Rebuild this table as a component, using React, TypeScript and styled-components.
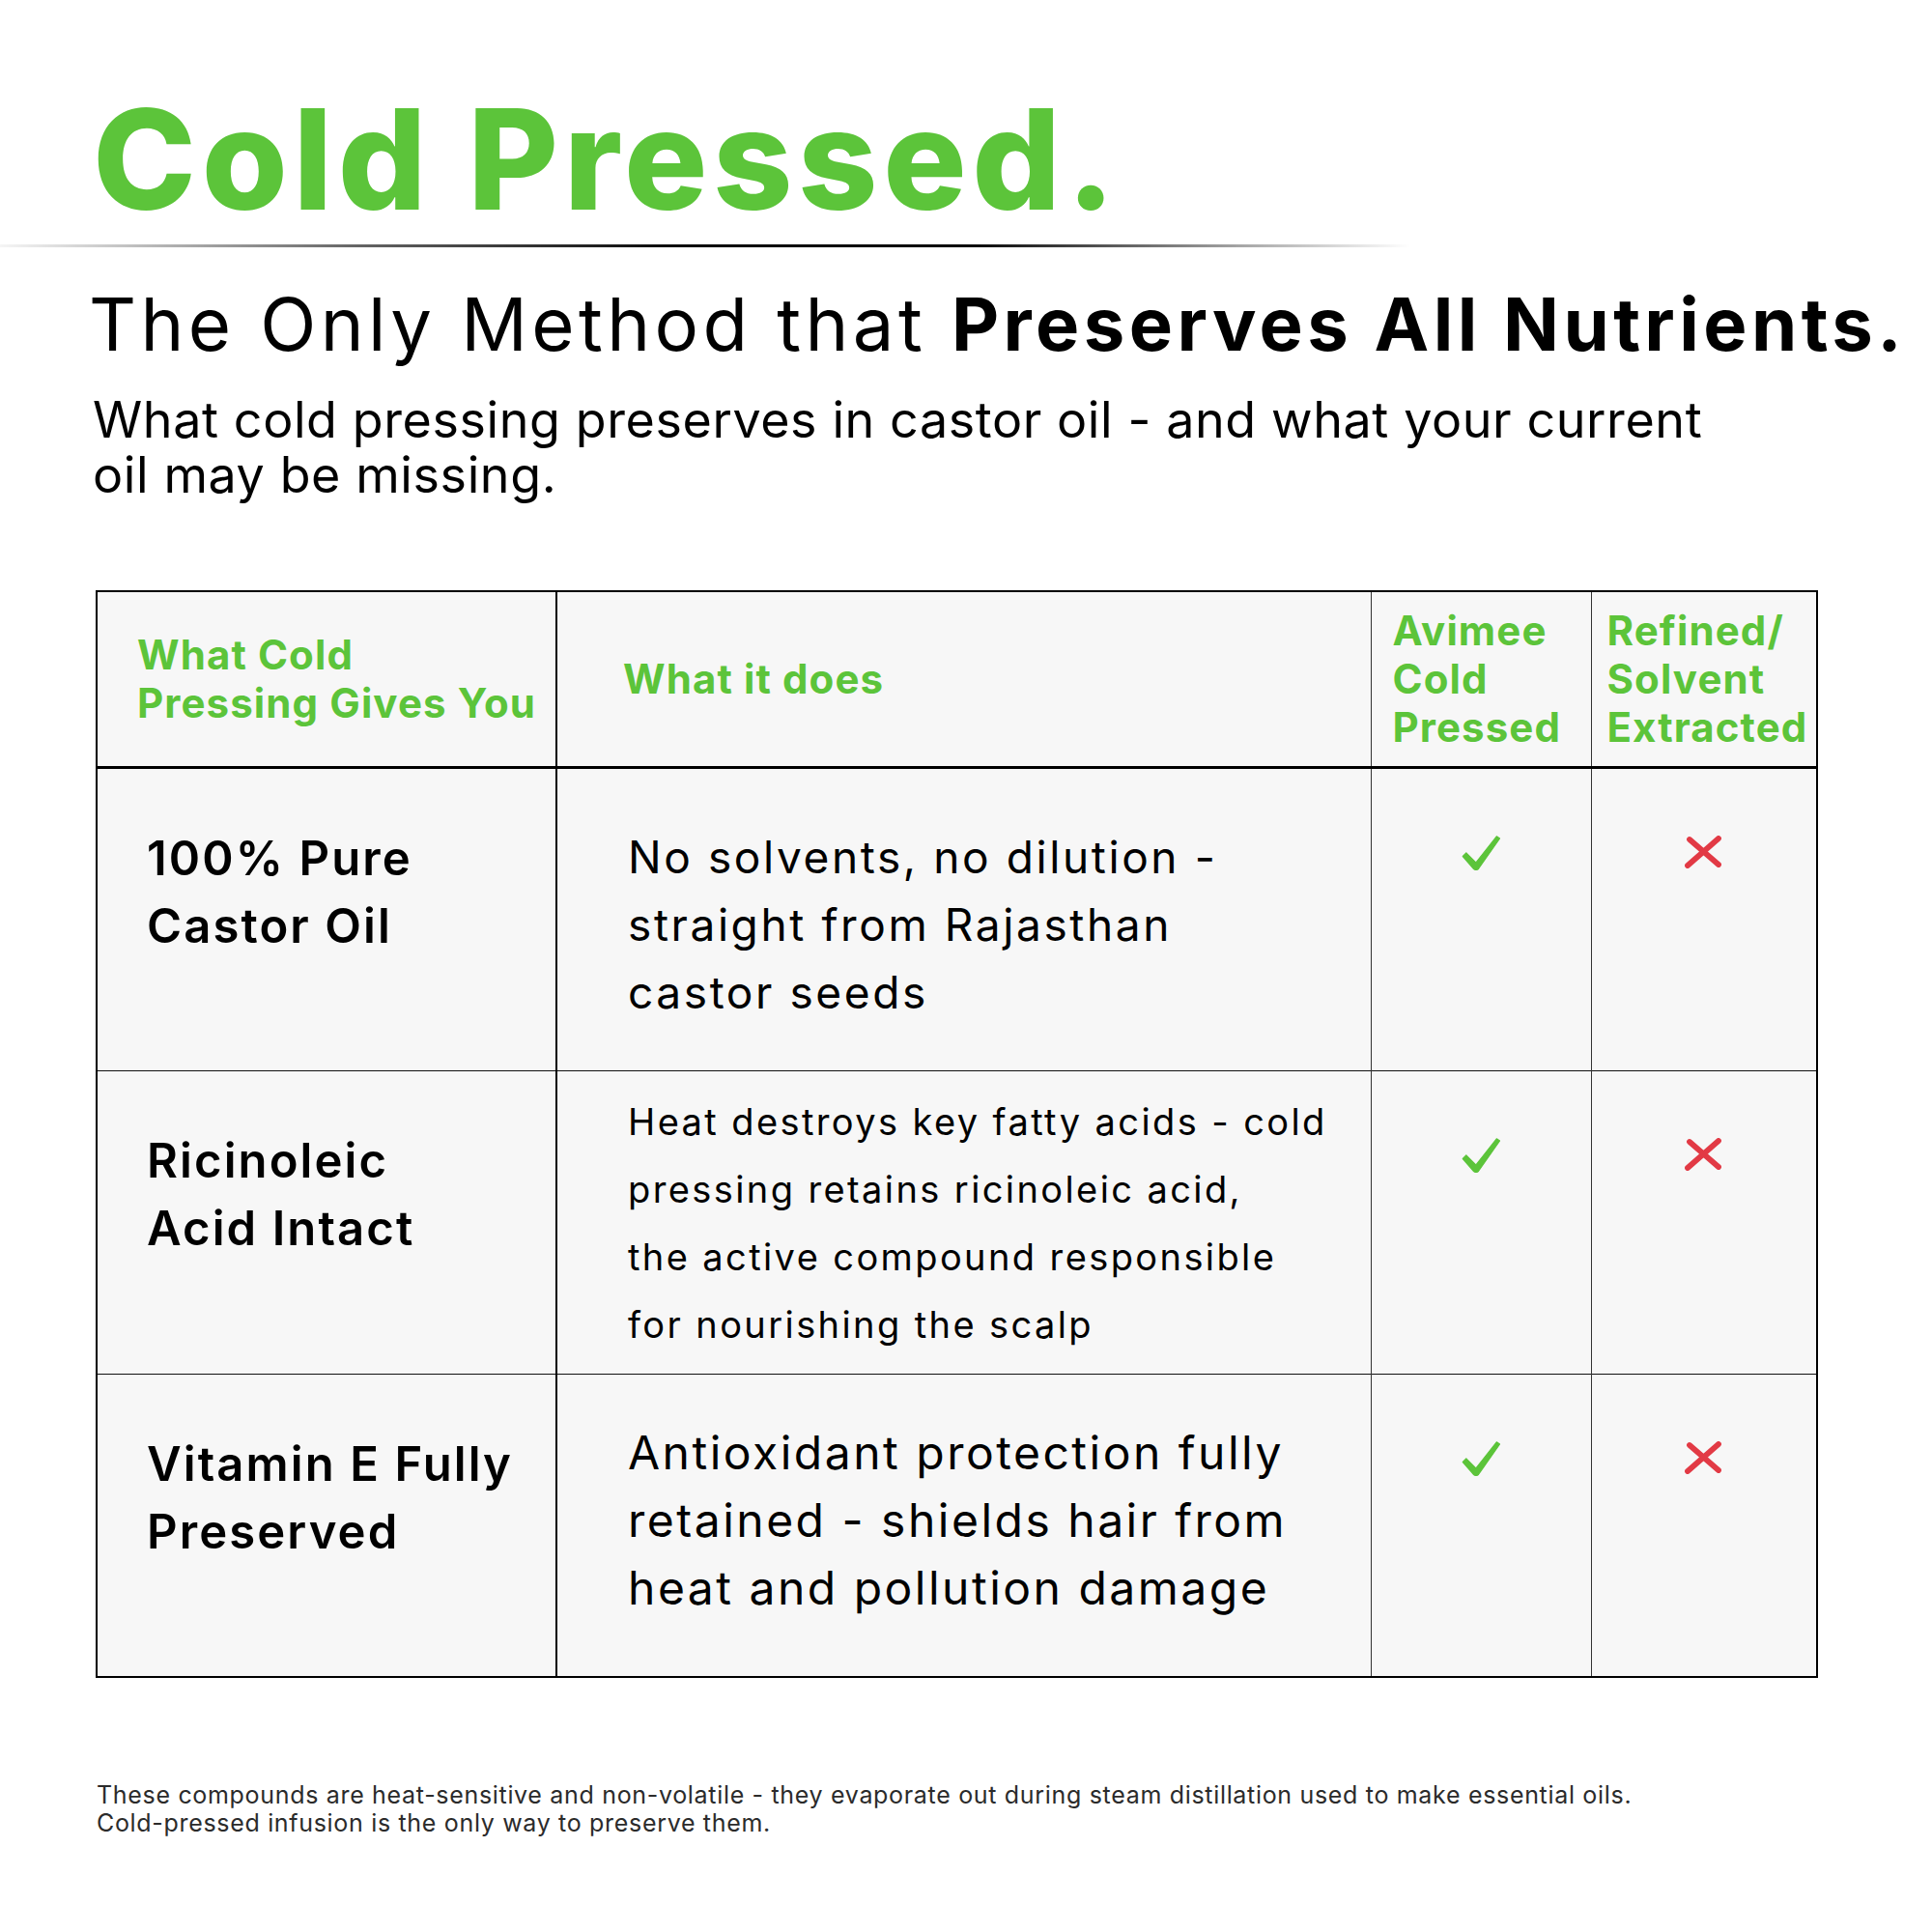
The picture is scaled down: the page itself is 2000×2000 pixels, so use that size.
import React from 'react';
import styled, { createGlobalStyle } from 'styled-components';

const GREEN = '#5cc43a';
const RED = '#e23a45';
const FONT = `"Inter", "Liberation Sans", sans-serif`;

const GlobalStyle = createGlobalStyle`
  html, body { margin: 0; padding: 0; background: #ffffff; }
  body { width: 2000px; height: 2000px; overflow: hidden; font-family: ${FONT}; }
`;

const Page = styled.div`
  position: relative;
  width: 2000px;
  height: 2000px;
  box-sizing: border-box;
  padding: 93px 0 0 96px;
  background: #ffffff;
  color: #000;
  font-family: ${FONT};
`;

const Title = styled.h1`
  margin: 0;
  font-size: 144px;
  line-height: 144px;
  font-weight: 800;
  color: ${GREEN};
  letter-spacing: 5.6px;
  white-space: nowrap;
`;

const Divider = styled.div`
  margin: 16px 0 0 -96px;
  width: 1460px;
  height: 3px;
  background: linear-gradient(90deg, rgba(0,0,0,0.04) 0%, rgba(0,0,0,0.6) 25%, #000 50%, #000 68%, rgba(0,0,0,0.35) 88%, rgba(0,0,0,0) 100%);
`;

const Subtitle = styled.h2`
  margin: 41px 0 0 -4px;
  font-size: 76px;
  line-height: 76px;
  font-weight: 400;
  white-space: nowrap;
  letter-spacing: 4.4px;
  strong { font-weight: 700; }
`;

const Lead = styled.p`
  margin: 33px 0 0 0;
  font-size: 52px;
  line-height: 57px;
  font-weight: 400;
  white-space: nowrap;
  letter-spacing: 0.6px;
`;

const Table = styled.table`
  margin: 91px 0 0 3px;
  border-collapse: collapse;
  table-layout: fixed;
  width: 1781px;
  background: #f7f7f7;
  border: 2px solid #000;
  font-family: ${FONT};
`;

const HeadRow = styled.tr`
  height: 182px;
  border-bottom: 3px solid #000;
`;

const BodyRow = styled.tr`
  height: 314px;
  border-bottom: 1.5px solid #111;
`;

const HeadCell = styled.th<{ $pad: number; $strong?: boolean }>`
  padding: 0 0 0 ${(p) => p.$pad}px;
  text-align: left;
  vertical-align: middle;
  font-size: 42px;
  line-height: 50px;
  font-weight: 700;
  letter-spacing: 1.1px;
  color: ${GREEN};
  white-space: nowrap;
  border-right: ${(p) => (p.$strong ? '2px solid #000' : '1px solid #333')};
`;

const LabelCell = styled.td`
  padding: 58px 0 0 51px;
  vertical-align: top;
  font-size: 49px;
  line-height: 70px;
  font-weight: 600;
  letter-spacing: 2.1px;
  white-space: nowrap;
  border-right: 2px solid #000;
`;

const TextCell = styled.td<{ $size: number; $top: number; $track: number }>`
  padding: ${(p) => p.$top}px 0 0 73px;
  vertical-align: top;
  font-size: ${(p) => p.$size}px;
  line-height: 70px;
  font-weight: 400;
  letter-spacing: ${(p) => p.$track}px;
  white-space: nowrap;
  border-right: 1px solid #333;
`;

const MarkCell = styled.td`
  padding: 69px 0 0 0;
  vertical-align: top;
  text-align: center;
  border-right: 1px solid #333;
  svg { display: inline-block; }
`;

const Footer = styled.p`
  margin: 0;
  position: absolute;
  left: 100px;
  top: 1844px;
  font-size: 25px;
  line-height: 29px;
  letter-spacing: 0.68px;
  color: #2b2b2b;
  white-space: nowrap;
`;

const Check = () => (
  <svg width="40" height="36" viewBox="0 0 40 36">
    <path
      d="M1.3 21.5 L4.8 17.8 L14.8 28 L36.3 0.8 L39.6 2.9 L17.4 34.5 Q15 36.4 12.6 34.5 Z"
      fill={GREEN}
      stroke={GREEN}
      strokeWidth="1.2"
      strokeLinejoin="round"
    />
  </svg>
);

const Cross = () => (
  <svg width="40" height="34" viewBox="0 0 40 34">
    <path d="M5 4 L35 30" stroke={RED} strokeWidth="5.8" strokeLinecap="round" />
    <path d="M35 3 L3 31" stroke={RED} strokeWidth="5.8" strokeLinecap="round" />
  </svg>
);

export default function App() {
  return (
    <>
      <GlobalStyle />
      <Page>
        <Title>Cold Pressed.</Title>
        <Divider />
        <Subtitle>
          The Only Method that <strong>Preserves All Nutrients.</strong>
        </Subtitle>
        <Lead>
          What cold pressing preserves in castor oil - and what your current
          <br />
          oil may be missing.
        </Lead>
        <Table>
          <colgroup>
            <col style={{ width: 476 }} />
            <col style={{ width: 843 }} />
            <col style={{ width: 228 }} />
            <col style={{ width: 234 }} />
          </colgroup>
          <thead>
            <HeadRow>
              <HeadCell $pad={41} $strong>
                What Cold
                <br />
                Pressing Gives You
              </HeadCell>
              <HeadCell $pad={68}>What it does</HeadCell>
              <HeadCell $pad={22}>
                Avimee
                <br />
                Cold
                <br />
                Pressed
              </HeadCell>
              <HeadCell $pad={16}>
                Refined/
                <br />
                Solvent
                <br />
                Extracted
              </HeadCell>
            </HeadRow>
          </thead>
          <tbody>
            <BodyRow>
              <LabelCell>
                100% Pure
                <br />
                Castor Oil
              </LabelCell>
              <TextCell $size={46} $top={56} $track={2.6}>
                No solvents, no dilution -
                <br />
                straight from Rajasthan
                <br />
                castor seeds
              </TextCell>
              <MarkCell><Check /></MarkCell>
              <MarkCell><Cross /></MarkCell>
            </BodyRow>
            <BodyRow>
              <LabelCell>
                Ricinoleic
                <br />
                Acid Intact
              </LabelCell>
              <TextCell $size={38} $top={17} $track={2.4}>
                Heat destroys key fatty acids - cold
                <br />
                pressing retains ricinoleic acid,
                <br />
                the active compound responsible
                <br />
                for nourishing the scalp
              </TextCell>
              <MarkCell><Check /></MarkCell>
              <MarkCell><Cross /></MarkCell>
            </BodyRow>
            <BodyRow>
              <LabelCell>
                Vitamin E Fully
                <br />
                Preserved
              </LabelCell>
              <TextCell $size={48} $top={46} $track={2.5}>
                Antioxidant protection fully
                <br />
                retained - shields hair from
                <br />
                heat and pollution damage
              </TextCell>
              <MarkCell><Check /></MarkCell>
              <MarkCell><Cross /></MarkCell>
            </BodyRow>
          </tbody>
        </Table>
        <Footer>
          These compounds are heat-sensitive and non-volatile - they evaporate out during steam distillation used to make essential oils.
          <br />
          Cold-pressed infusion is the only way to preserve them.
        </Footer>
      </Page>
    </>
  );
}
